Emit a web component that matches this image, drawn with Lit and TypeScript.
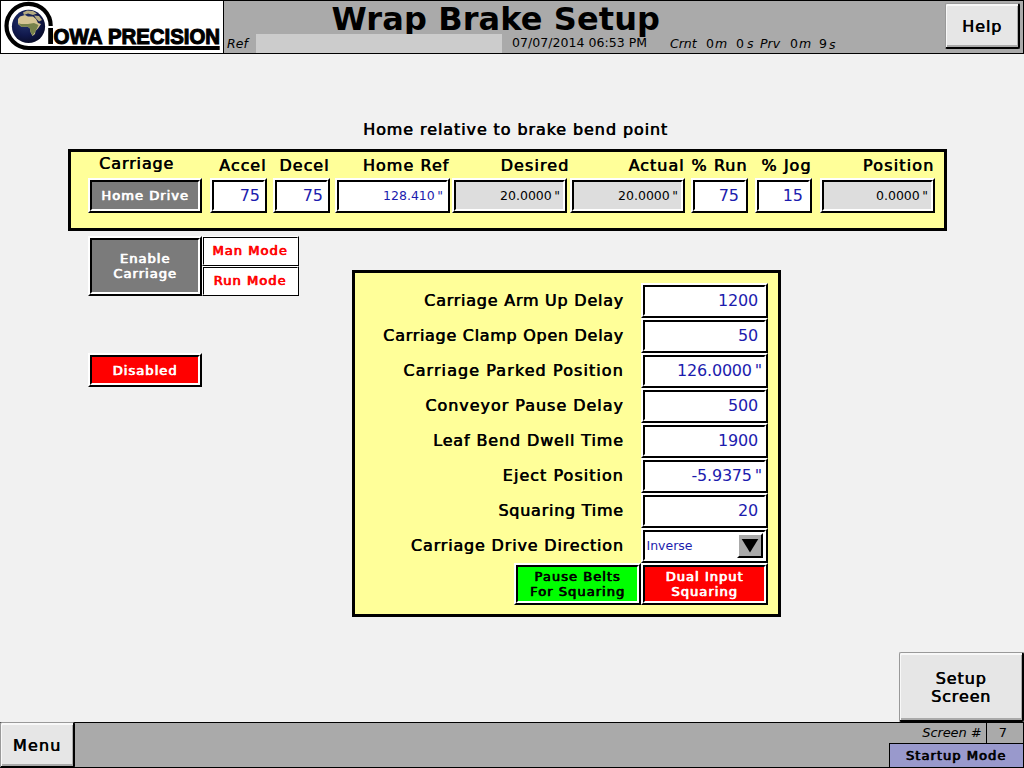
import { LitElement, html, svg, css, nothing } from "lit";
import { customElement } from "lit/decorators.js";

interface AxisField {
  label: string;
  value: string;
  size: "small" | "wide";
  kind?: string;
  unit?: string;
  readonly?: boolean;
  track?: number;
}

const axisFields: AxisField[] = [
  { label: "Accel", value: "75", size: "small" },
  { label: "Decel", value: "75", size: "small" },
  { label: "Home Ref", value: "128.410", size: "wide", unit: '"', track: 1.05 },
  { label: "Desired", value: "20.0000", size: "wide", unit: '"', readonly: true, track: 1.1, kind: "overhang" },
  { label: "Actual", value: "20.0000", size: "wide", unit: '"', readonly: true, track: 0.95 },
  { label: "% Run", value: "75", size: "small", track: 1, kind: "percent" },
  { label: "% Jog", value: "15", size: "small", track: 1, kind: "percent" },
  { label: "Position", value: "0.0000", size: "wide", unit: '"', readonly: true, track: 1.15 },
];

const settings: { label: string; value: string; unit?: string; track: number }[] = [
  { label: "Carriage Arm Up Delay", value: "1200", track: 0.75 },
  { label: "Carriage Clamp Open Delay", value: "50", track: 0.7 },
  { label: "Carriage Parked Position", value: "126.0000", unit: '"', track: 1.08 },
  { label: "Conveyor Pause Delay", value: "500", track: 0.96 },
  { label: "Leaf Bend Dwell Time", value: "1900", track: 0.86 },
  { label: "Eject Position", value: "-5.9375", unit: '"', track: 1.02 },
  { label: "Squaring Time", value: "20", track: 0.75 },
];

const logo = svg`
  <svg class="logo" viewBox="0 0 222 52" width="222" height="52">
    <defs>
      <radialGradient id="sea" cx="0.4" cy="0.35" r="0.7">
        <stop offset="0" stop-color="#26386f" />
        <stop offset="0.6" stop-color="#10184c" />
        <stop offset="1" stop-color="#080b24" />
      </radialGradient>
    </defs>
    <circle cx="27.5" cy="25.4" r="16.6" fill="url(#sea)" />
    <path d="M17 18 L19 15.5 L24 14 L27 15.5 L32 15.5 L35 18 L37 22 L40 23 L37 27.5 L34.5 30 L34 33 L31.5 35 L29.5 31 L29 27.5 L26.5 25.5 L20.5 26 L17 23 Z" fill="#d5c594" />
    <path d="M17 22 L20 23 L27 23 L33 22 L37.5 24 L36 27.5 L33.5 32 L31.5 34.5 L29.6 31 L29 27.5 L26.5 25.5 L20.5 26 Z" fill="#76824b" />
    <path d="M22 11.5 L26 9.5 L32 10 L36 12.5 L32 14 L27 12.5 L23 14 Z M33 14.5 L38 15 L41 19 L38 20.5 L35.5 18 Z" fill="#b5ab80" />
    <path d="M49.7 25 A 22.1 22.1 0 1 0 27.6 47 L218.7 47" fill="none" stroke="#000" stroke-width="4.2" />
    <rect x="47.2" y="27" width="4.8" height="16" />
    <text x="52.5" y="43" font-size="21.5" textLength="49" lengthAdjust="spacingAndGlyphs">OWA</text>
    <text x="107" y="43" font-size="21.5" textLength="112" lengthAdjust="spacingAndGlyphs">PRECISION</text>
  </svg>`;

@customElement("app-root")
export class AppRoot extends LitElement {
  static styles = css`
    :host {
      display: flex;
      flex-direction: column;
      width: 1024px;
      height: 768px;
      overflow: hidden;
      background: #f1f1f1;
      color: #000;
      font: 16px/19px "DejaVu Sans", sans-serif;
      --ink: #1c1cae;
    }
    * { box-sizing: border-box; }

    .heavy, .heavy13 { white-space: pre; }
    .heavy { letter-spacing: 0.87px; -webkit-text-stroke: 0.22px currentColor; text-shadow: 0.5px 0 0 currentColor; }
    .heavy13 { font-size: 13px; line-height: 15px; letter-spacing: 1.05px; -webkit-text-stroke: 0.35px currentColor; text-shadow: 0.7px 0 0 currentColor; }

    /* header */
    header {
      display: grid;
      grid-template-columns: 224px 719px 80px;
      height: 54px;
      border: 1px solid #000;
      border-left: 0;
      background: #aaa;
    }
    .brand { background: #fff; border-left: 1px solid #000; border-right: 1px solid #000; height: 52px; }
    .logo { display: block; overflow: visible; font-family: "Liberation Sans", sans-serif; font-weight: bold; }
    .logo text { stroke: #000; stroke-width: 1.1px; }
    .head-mid { display: grid; grid-template-rows: 33px 19px; }
    h1 {
      margin: 0;
      padding-left: 107.5px;
      font-size: 32px;
      line-height: 36px;
      font-weight: bold;
      letter-spacing: 0.1px;
      white-space: nowrap;
    }
    .status { display: flex; font-size: 12.5px; line-height: 20px; white-space: nowrap; }
    .status i { font-style: oblique; }
    .ref { width: 32px; padding-left: 3px; }
    .ref-box { width: 246px; height: 19px; background: #ccc; position: relative; }
    .stamp { width: 168px; padding-left: 10px; line-height: 18px; letter-spacing: 0.04px; }
    .low { line-height: 22px; }
    .w9 { width: 9px; }
    .w10 { width: 10px; }
    .w11 { width: 11px; }
    .w13 { width: 13px; }
    .w20 { width: 20px; }
    .w21 { width: 21px; }
    .w30 { width: 30px; }
    .w36 { width: 36px; }
    .help-cell { padding: 2px 0 0 2px; }

    /* raised grey push buttons */
    .push {
      display: flex;
      align-items: center;
      justify-content: center;
      text-align: center;
      line-height: 18px;
      padding-top: 2px;
      background: #e6e6e6;
      border: solid;
      border-width: 1px 2px 2px 1px;
      border-color: #999 #000 #000 #999;
      border-radius: 2px;
      box-shadow: inset 1px 2px 0 #f8f8f8, inset -1px -2px 0 #aaa;
    }
    .help { width: 75px; height: 46px; }
    .setup { width: 125px; height: 70px; }
    .menu { width: 75px; height: 46px; }

    /* sunken double bevels */
    .bevel {
      border: 2px solid;
      border-color: #fff #000 #000 #fff;
      height: 35px;
    }
    .bevel > .in {
      height: 100%;
      border: 2px solid;
      border-color: #000 #fff #fff #000;
      background: #fff;
      display: flex;
      align-items: center;
      justify-content: flex-end;
      color: var(--ink);
    }
    .bevel.thin, .bevel.thin > .in { border-width: 1px; }
    .bevel.button > .in { justify-content: center; text-align: center; color: #fff; }
    .bevel.grey > .in { background: #7b7b7b; }
    .bevel.red > .in { background: #f00; }
    .bevel.green > .in { background: #0f0; color: #000; }
    .bevel.ro > .in { background: #ddd; color: #000; }

    main { flex: 1; display: flex; flex-direction: column; }
    .note { margin: 67px 0 0 363px; line-height: 18px; letter-spacing: 0.9px; }

    .axis {
      margin: 10px 0 0 68px;
      width: 879px;
      height: 82px;
      border: 3px solid #000;
      background: #ff9;
      padding: 3px 0 0 17px;
      display: grid;
      grid-template-columns: 122px 63px 62px 117px 118px 121px 64px 65px 115px;
      align-content: start;
    }
    .cell .label { height: 23px; line-height: 22px; text-align: right; padding-right: 0.7px; }
    .small { width: 57px; }
    .wide { width: 115px; }
    .cell .wide .in { font-size: 12.5px; padding-right: 3px; }
    .cell .small .in { padding-right: 3px; }
    .cell.percent .small .in { padding-right: 5px; }
    .cell.overhang .label { margin-right: -3px; width: 118px; }
    .cell .unit { padding-left: 2.5px; }
    .cell.home .label { text-align: left; padding-left: 11px; line-height: 17px; }
    .home .bevel { width: 114px; }

    .lower { display: flex; }
    .left { width: 352px; padding: 5px 0 0 88px; }
    .enable { display: flex; }
    .enable .big { width: 114px; height: 60px; }
    .mode { width: 97px; height: 30px; }
    .mode .in.in { color: #f00; padding: 0 1px 2px 0; }
    .disabled { width: 114px; height: 34px; margin-top: 57px; }

    .panel {
      margin-top: 39px;
      width: 429px;
      height: 347px;
      border: 3px solid #000;
      background: #ff9;
      padding: 10px 10px 0 0;
    }
    .row { display: grid; grid-template-columns: 1fr 127px; align-items: center; height: 35px; }
    .row .label { text-align: right; padding-right: 17.3px; }
    .row .label.last { letter-spacing: 0.82px; }
    .row .in { padding-right: 6px; letter-spacing: -0.2px; }
    .row .in.has-unit { padding-right: 2px; }
    .row .unit { padding-left: 3px; }
    .row .in.select { justify-content: space-between; padding: 0 1px 0 1.5px; font-size: 12.5px; letter-spacing: 0; }
    .drop {
      width: 26px;
      height: 25px;
      border: 2px solid;
      border-color: #fff #000 #000 #fff;
      background: #aaa;
      display: block;
    }
    .toggles { display: flex; justify-content: flex-end; }
    .toggles .bevel { width: 127px; height: 42px; }

    .corner { margin-top: auto; align-self: flex-end; }
    footer {
      height: 46px;
      display: flex;
      justify-content: space-between;
      background: #aaa;
      border-top: 1px solid #000;
      border-bottom: 1px solid #000;
      border-right: 1px solid #000;
    }
    footer .menu { margin-top: -1px; letter-spacing: 1.1px; }
    .info { width: 134px; }
    .screen { display: flex; height: 20px; font-size: 13px; line-height: 20px; }
    .screen i { width: 97px; text-align: right; padding-right: 4.5px; letter-spacing: -0.1px; }
    .screen b { font-weight: normal; flex: 1; border-left: 1px solid #000; text-align: center; padding-right: 4px; }
    .startup { height: 24px; line-height: 23px; border: solid #000; border-width: 1px 0 0 1px; background: #99c; text-align: center; padding-right: 1px; }
  `;

  private value(v: string, unit?: string) {
    return html`${v}${unit ? html`<span class="unit">${unit}</span>` : nothing}`;
  }

  private axisCell(f: AxisField) {
    return html`<div class="cell ${f.kind ?? ""}">
      <div class="label heavy ${f.size}" style="letter-spacing:${f.track ?? 0.95}px">${f.label}</div>
      <div class="bevel ${f.size} ${f.readonly ? "ro" : ""}"><div class="in">${this.value(f.value, f.unit)}</div></div>
    </div>`;
  }

  private button(text: string, cls: string) {
    return html`<div class="bevel button ${cls}"><div class="in heavy13">${text}</div></div>`;
  }

  render() {
    return html`
      <header>
        <div class="brand">${logo}</div>
        <div class="head-mid">
          <h1>Wrap Brake Setup</h1>
          <div class="status">
            <i class="ref">Ref</i>
            <div class="ref-box"></div>
            <span class="stamp">07/07/2014 06:53 PM</span>
            <i class="w36">Crnt</i>
            <span class="w9">0</span><i class="w21">m</i>
            <span class="w11">0</span><i class="w13">s</i>
            <i class="w30">Prv</i>
            <span class="w9">0</span><i class="w20">m</i>
            <span class="w10">9</span><i class="low">s</i>
          </div>
        </div>
        <div class="help-cell"><div class="push help heavy">Help</div></div>
      </header>
      <main>
        <div class="note heavy">Home relative to brake bend point</div>
        <section class="axis">
          <div class="cell home"><div class="label heavy">Carriage</div>${this.button("Home Drive", "grey")}</div>
          ${axisFields.map((f) => this.axisCell(f))}
        </section>
        <div class="lower">
          <div class="left">
            <div class="enable">
              ${this.button("Enable\nCarriage", "grey big")}
              <div>${this.button("Man Mode", "thin mode")}${this.button("Run Mode", "thin mode")}</div>
            </div>
            ${this.button("Disabled", "red disabled")}
          </div>
          <section class="panel">
            ${settings.map(
              (s) => html`<div class="row">
                <div class="label heavy" style="letter-spacing:${s.track}px">${s.label}</div>
                <div class="bevel"><div class="in ${s.unit ? "has-unit" : ""}">${this.value(s.value, s.unit)}</div></div>
              </div>`
            )}
            <div class="row">
              <div class="label heavy last">Carriage Drive Direction</div>
              <div class="bevel">
                <div class="in select"><span>Inverse</span><svg class="drop" viewBox="0 0 22 21"><path d="M2.7 4H19.3L11 17.5Z" /></svg></div>
              </div>
            </div>
            <div class="toggles">${this.button("Pause Belts\nFor Squaring", "green")}${this.button("Dual Input\nSquaring", "red")}</div>
          </section>
        </div>
        <div class="push setup corner heavy">${"Setup\nScreen"}</div>
      </main>
      <footer>
        <div class="push menu heavy">Menu</div>
        <div class="info">
          <div class="screen"><i>Screen #</i><b>7</b></div>
          <div class="startup heavy13">Startup Mode</div>
        </div>
      </footer>
    `;
  }
}
